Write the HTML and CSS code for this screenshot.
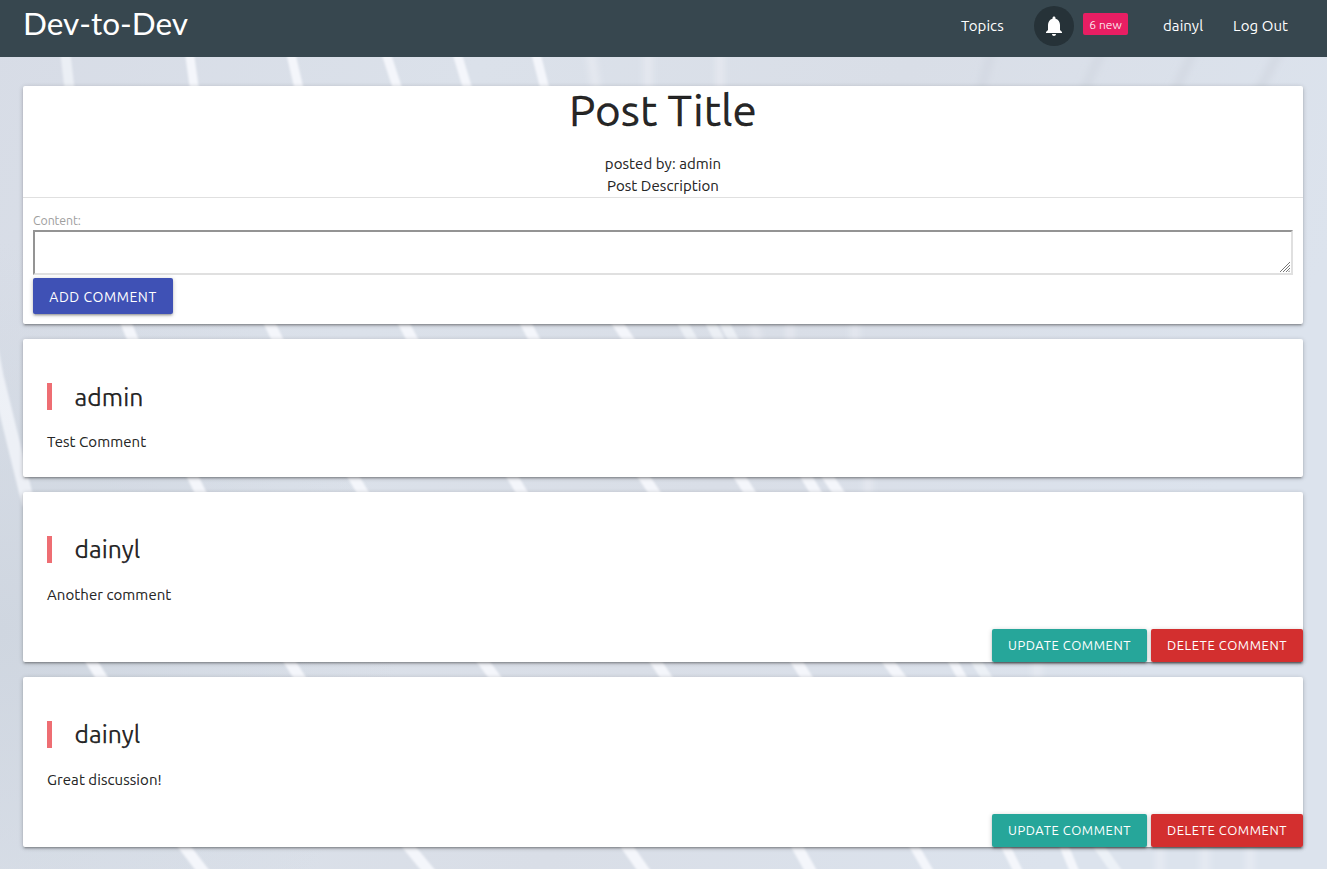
FILE: index.html
```
<!DOCTYPE html>
<html lang="en">
<head>
<meta charset="utf-8">
<title>Dev-to-Dev</title>
<link rel="stylesheet" href="styles.css">
</head>
<body>
<svg class="backdrop" viewBox="0 0 1327 869" preserveAspectRatio="none" aria-hidden="true">
  <defs>
    <linearGradient id="sky" x1="0" y1="0" x2="1" y2="0.3">
      <stop offset="0" stop-color="#d7dce6"/><stop offset="0.35" stop-color="#dbe1ea"/>
      <stop offset="0.65" stop-color="#d9dee7"/><stop offset="1" stop-color="#dce3ed"/>
    </linearGradient>
    <radialGradient id="edge" cx="0" cy="0.5" r="0.5" gradientTransform="scale(2 1)">
      <stop offset="0" stop-color="#cfd6e0"/><stop offset="1" stop-color="#cfd6e0" stop-opacity="0"/>
    </radialGradient>
    <filter id="soft" filterUnits="userSpaceOnUse" x="-20" y="0" width="1360" height="890"><feGaussianBlur stdDeviation="1.3"/></filter>
    <filter id="haze" filterUnits="userSpaceOnUse" x="-20" y="0" width="1360" height="890"><feGaussianBlur stdDeviation="3"/></filter>
  </defs>
  <rect width="1327" height="869" fill="url(#sky)"/>
  <rect y="240" width="400" height="780" fill="url(#edge)"/>
  <g class="rays" filter="url(#soft)">
    <path class="ray-mid" d="M65 50L70 93"/>
    <path d="M189 50L195 93M290 50L300 93M385 50L399 93M456 50L469 93M535 50L546 93"/>
    <path class="ray-wide" d="M124 318L135 345M267 318L280 345M401 318L415 345M523 318L537 345M614 318L632 345"/>
    <path class="ray-mid" d="M680 318L695 345M708 318L722 345M722 318L736 345"/>
    <path class="ray-wide" d="M190 471L203 498M350 471L366 498M509 471L525 498M640 471L658 498M736 471L753 498M803 471L819 498M824 471L842 498"/>
    <path class="ray-left" d="M-8 350L-3 376L25 490L29 505"/>
    <path class="ray-wide" d="M88 656L105 683M286 656L303 683M479 656L499 683M652 656L670 683M793 656L810 683M884 656L904 683"/>
    <path class="ray-wide" d="M180 841L206 875M404 841L432 875M623 841L647 875M794 841L813 875"/>
    <path d="M911 841L931 875M1003 841L1020 875M1062 841L1076 875M950 656L965 683"/>
    <path class="ray-mid" d="M973 656L990 683M1095 841L1119 875"/>
  </g>
  <g class="rays rays-faint" filter="url(#haze)">
    <path d="M590 50L597 93M648 50V93M720 50V93M752 318L759 345M790 318V345M855 318V345M868 471V498M1037 656V683M1160 841V875M1205 841V875M1250 841V875"/>
  </g>
  <g class="shades" filter="url(#haze)">
    <path d="M992 50L980 93M1102 50L1083 93M1194 50L1174 93M1280 50L1258 93"/>
  </g>
</svg>

<nav class="navbar">
  <a class="brand">Dev-to-Dev</a>
  <div class="links">
    <a class="link topics">Topics</a>
    <a class="bell">
      <svg viewBox="0 0 24 24" width="24" height="24"><path d="M12 22c1.1 0 2-.9 2-2h-4c0 1.1.89 2 2 2zm6-6v-5c0-3.07-1.64-5.64-4.5-6.32V4c0-.83-.67-1.5-1.5-1.5s-1.500.67-1.500 1.500v.68C7.630 5.360 6 7.920 6 11v5l-2 2v1h16v-1l-2-2z"/></svg>
    </a>
    <span class="badge">6 new</span>
    <a class="link user">dainyl</a>
    <a class="link logout">Log Out</a>
  </div>
</nav>

<main class="page">
  <section class="card post">
    <header class="post-head">
      <h1 class="post-title">Post Title</h1>
      <p class="post-line">posted by: admin</p>
      <p class="post-line">Post Description</p>
    </header>
    <form class="comment-form">
      <label class="form-label" for="content">Content:</label>
      <div class="field">
        <textarea class="content" id="content"></textarea>
        <svg class="grip" viewBox="0 0 10 10" width="10" height="10" aria-hidden="true"><path d="M0 10L10 0M3 10L10 3M6 10L10 6M8.500 10L10 8.500"/></svg>
      </div>
      <button class="btn add" type="button">ADD COMMENT</button>
    </form>
  </section>

  <article class="card comment">
    <h2 class="who who-first">admin</h2>
    <p class="text">Test Comment</p>
  </article>

  <article class="card comment">
    <h2 class="who">dainyl</h2>
    <p class="text">Another comment</p>
    <div class="actions">
      <button class="btn small update" type="button">UPDATE COMMENT</button>
      <button class="btn small delete" type="button">DELETE COMMENT</button>
    </div>
  </article>

  <article class="card comment">
    <h2 class="who">dainyl</h2>
    <p class="text">Great discussion!</p>
    <div class="actions">
      <button class="btn small update" type="button">UPDATE COMMENT</button>
      <button class="btn small delete" type="button">DELETE COMMENT</button>
    </div>
  </article>
</main>
</body>
</html>
```

FILE: styles.css
```
* { box-sizing: border-box; }

body {
  margin: 0;
  height: 869px;
  overflow: hidden;
  color: rgba(0, 0, 0, 0.87);
  font-family: Ubuntu, "Noto Sans", sans-serif;
  font-size: 15px;
  letter-spacing: 0.07px;
  line-height: 22px;
}

h1, h2, p { margin: 0; font-weight: 400; }

.backdrop {
  position: absolute;
  inset: 0;
  z-index: -1;
  width: 100%;
  height: 869px;
}
.rays path { fill: none; stroke: #f4f6fb; stroke-width: 9; }
.rays .ray-wide { stroke-width: 11; }
.rays .ray-left { stroke-width: 13; stroke-opacity: 0.8; }
.rays .ray-mid { stroke-width: 10; stroke-opacity: 0.7; }
.rays-faint path { stroke-opacity: 0.4; }
.shades path { fill: none; stroke: #d2d7e1; stroke-width: 10; stroke-opacity: 0.7; }

.navbar {
  display: flex;
  justify-content: space-between;
  height: 57px;
  padding: 0 39px 0 23px;
  background: #37474f;
  color: #fff;
}
.brand {
  font-family: Lato, sans-serif;
  font-size: 31.5px;
  letter-spacing: 0;
  line-height: 46px;
}
.links { display: flex; align-items: flex-start; }
.link { height: 52px; line-height: 52px; white-space: nowrap; }
.topics { width: 43px; margin-right: 30px; }
.bell {
  display: flex;
  align-items: center;
  justify-content: center;
  width: 40px;
  height: 40px;
  margin: 6px 9px 0 0;
  border-radius: 50%;
  background: #263238;
}
.bell svg { fill: #fff; }
.badge {
  width: 45px;
  height: 22px;
  margin: 13px 35px 0 0;
  border-radius: 2px;
  background: #e91e63;
  color: #fff;
  font-size: 12px;
  font-weight: 300;
  line-height: 24px;
  text-align: center;
}
.user { width: 41px; margin-right: 29px; }
.logout { width: 55px; }

.page {
  display: flex;
  flex-direction: column;
  gap: 15px;
  padding: 29px 24px 0 23px;
}
.card {
  border-radius: 2px;
  background: #fff;
  box-shadow: 0 2px 2px 0 rgba(0, 0, 0, 0.14), 0 3px 1px -2px rgba(0, 0, 0, 0.12), 0 1px 5px 0 rgba(0, 0, 0, 0.2);
}

.post { height: 238px; }
.post-head {
  height: 112px;
  border-bottom: 1px solid #e0e0e0;
  text-align: center;
}
.post-title { height: 67px; font-size: 44px; line-height: 48px; -webkit-text-stroke: 0.4px; }
.comment-form {
  display: flex;
  flex-direction: column;
  align-items: flex-start;
  padding: 12px 10px 0;
}
.form-label { height: 20px; color: #9e9e9e; font-size: 12.4px; letter-spacing: -0.1px; line-height: 21px; }
.field { position: relative; width: 100%; height: 45px; margin-bottom: 3px; }
.content {
  display: block;
  width: 100%;
  height: 45px;
  border: 2px solid;
  border-color: #949494 #e0e0e0 #e0e0e0 #949494;
  background: transparent;
  resize: none;
}
.grip { position: absolute; right: 3px; bottom: 3px; fill: none; stroke: #777; stroke-width: 1; }

.btn {
  width: 140px;
  height: 36px;
  padding: 0;
  border: 0;
  border-radius: 2px;
  background: #3f51b5;
  color: #fff;
  font-family: inherit;
  font-size: 14px;
  letter-spacing: 0.56px;
  line-height: 38px;
  text-align: center;
  white-space: nowrap;
  box-shadow: 0 2px 2px 0 rgba(0, 0, 0, 0.14), 0 3px 1px -2px rgba(0, 0, 0, 0.12), 0 1px 5px 0 rgba(0, 0, 0, 0.2);
}
.small { height: 33px; font-size: 13px; line-height: 33px; }
.update { width: 155px; background: #26a69a; }
.delete { width: 152px; background: #d32f2f; }

.comment { padding-top: 44px; }
.comment:nth-child(2) { height: 138px; }
.comment:nth-child(n + 3) { height: 170px; }
.who {
  height: 27px;
  margin-left: 24px;
  padding-left: 22.500px;
  border-left: 5px solid #ee6e73;
  font-size: 24.7px;
  line-height: 27px;
  -webkit-text-stroke: 0.25px;
}
.who-first { line-height: 28px; }
.text, .post-line { -webkit-text-stroke: 0.15px; }
.text { height: 22px; margin: 21px 0 0 24px; }
.actions { display: flex; justify-content: flex-end; gap: 4px; margin-top: 23px; }
```
